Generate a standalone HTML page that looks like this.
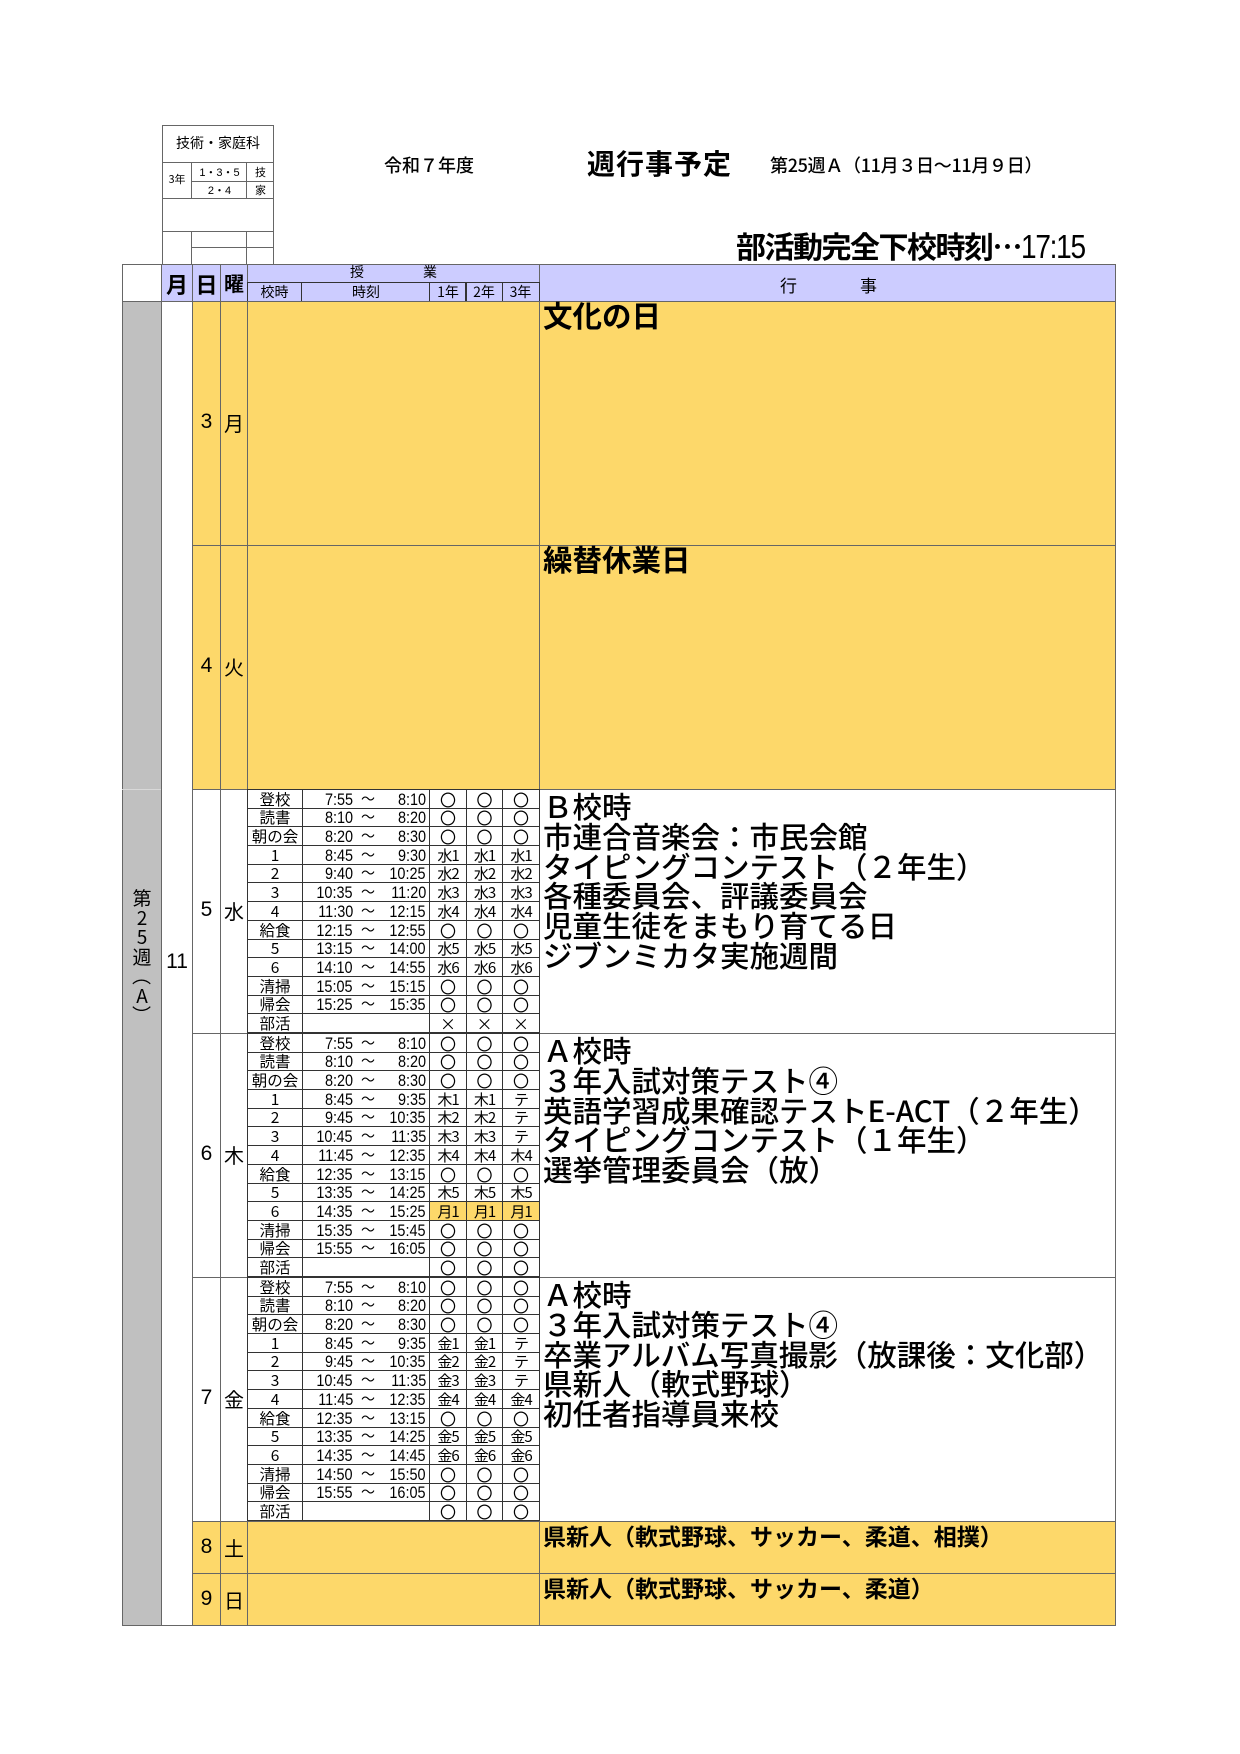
<!DOCTYPE html>
<html><head><meta charset="utf-8"><style>
*{margin:0;padding:0;box-sizing:border-box}
body{width:1240px;height:1754px;background:#fff;position:relative;font-family:"Liberation Sans","Noto Sans CJK JP",sans-serif;color:#000;overflow:hidden}
.a{position:absolute}
.c{position:absolute;border:1px solid #666}
.y{background:#fdd86a}
.h{background:#ccccff}
.g{background:#c0c0c0}
.ev{position:absolute;left:543px;width:570px;font-size:29.5px;line-height:29.8px;white-space:nowrap;font-family:"Noto Sans CJK JP",sans-serif;font-weight:500}
.ev2{position:absolute;left:543px;font-size:23px;line-height:26px;white-space:nowrap;font-family:"Noto Sans CJK JP",sans-serif;font-weight:bold}
table.s{position:absolute;left:247px;width:292px;height:244px;border-collapse:collapse;table-layout:fixed;font-family:"Noto Sans CJK JP",sans-serif;font-size:16px}
table.s td{border:1px solid #333;height:18.7px;line-height:17px;padding:0;text-align:center;white-space:nowrap;overflow:hidden;position:relative;vertical-align:bottom}
table.s td:first-child{font-size:15.5px;line-height:17px}
table.s td.t{font-family:"Liberation Sans Narrow","Liberation Sans",sans-serif;font-size:17px}
table.s td.t b,table.s td.t i,table.s td.t u{position:absolute;bottom:0;font-weight:normal;font-style:normal;text-decoration:none;display:inline-block;transform:scaleX(0.85);transform-origin:right bottom}
table.s td.t b{right:76px}
table.s td.t i{left:58px;font-family:"Noto Sans CJK JP",sans-serif;font-size:14px;transform:none}
table.s td.t u{right:3px}
table.s td.m{font-size:15px;letter-spacing:-1px}
table.s td.yy{background:#fdd86a}
.dd{font-size:21px;font-family:"Liberation Sans Narrow","Liberation Sans",sans-serif;text-align:center}
.ww{font-size:20px;font-family:"Noto Sans CJK JP",sans-serif;text-align:center}
</style></head><body>

<div class="c" style="left:162px;top:125px;width:112px;height:140px"></div>
<div class="a" style="left:162px;top:133px;width:112px;text-align:center;font-size:14px;font-family:'Noto Sans CJK JP',sans-serif">技術・家庭科</div>
<div class="c" style="left:162px;top:162px;width:112px;height:37px"></div>
<div class="c" style="left:162px;top:162px;width:30px;height:37px"></div>
<div class="c" style="left:246px;top:162px;width:28px;height:37px"></div>
<div class="c" style="left:191px;top:181px;width:56px;height:1px;border-width:1px 0 0 0"></div>
<div class="c" style="left:246px;top:181px;width:28px;height:1px;border-width:1px 0 0 0"></div>
<div class="a" style="left:162px;top:171px;width:30px;text-align:center;font-size:11px;font-family:'Noto Sans CJK JP',sans-serif">3年</div>
<div class="a" style="left:192px;top:164px;width:55px;text-align:center;font-size:11px">1・3・5</div>
<div class="a" style="left:192px;top:182px;width:55px;text-align:center;font-size:11px">2・4</div>
<div class="a" style="left:247px;top:164px;width:27px;text-align:center;font-size:11px;font-family:'Noto Sans CJK JP',sans-serif">技</div>
<div class="a" style="left:247px;top:182px;width:27px;text-align:center;font-size:11px;font-family:'Noto Sans CJK JP',sans-serif">家</div>
<div class="c" style="left:162px;top:231px;width:112px;height:34px"></div>
<div class="c" style="left:191px;top:231px;width:56px;height:34px"></div>
<div class="c" style="left:191px;top:247px;width:83px;height:1px;border-width:1px 0 0 0"></div>

<div class="a" style="left:384px;top:152px;font-size:18px;font-family:'Noto Sans CJK JP',sans-serif;font-weight:500">令和７年度</div>
<div class="a" style="left:587px;top:143px;font-size:28px;font-weight:bold;font-family:'Noto Sans CJK JP',sans-serif;letter-spacing:1px">週行事予定</div>
<div class="a" style="left:770px;top:152px;font-size:18px;font-family:'Noto Sans CJK JP',sans-serif;letter-spacing:-0.3px;font-weight:500">第25週Ａ（11月３日～11月９日）</div>
<div class="a" style="left:736px;top:227px;font-size:30px;font-family:'Noto Sans CJK JP',sans-serif;font-weight:bold;letter-spacing:-1.5px;line-height:36px">部活動完全下校時刻…<span style="font-family:'Liberation Sans Narrow','Liberation Sans',sans-serif;font-weight:normal;font-size:33px;display:inline-block;transform:scaleX(0.85);transform-origin:left">17:15</span></div>

<div class="c" style="left:122px;top:264px;width:40px;height:38px"></div>
<div class="c h" style="left:161px;top:264px;width:32px;height:38px"></div>
<div class="c h" style="left:192px;top:264px;width:29px;height:38px"></div>
<div class="c h" style="left:220px;top:264px;width:28px;height:38px"></div>
<div class="c h" style="left:247px;top:264px;width:293px;height:38px"></div>
<div class="c h" style="left:539px;top:264px;width:577px;height:38px"></div>
<div class="c" style="left:247px;top:282px;width:293px;height:20px;border-color:#333"></div>
<div class="c" style="left:301px;top:282px;width:129px;height:20px;border-color:#333"></div>
<div class="c" style="left:429px;top:282px;width:38px;height:20px;border-color:#333"></div>
<div class="c" style="left:465px;top:282px;width:38px;height:20px;border-color:#333"></div>
<div class="a ww" style="left:161px;top:268px;width:32px;font-size:22px;font-weight:bold">月</div>
<div class="a ww" style="left:192px;top:268px;width:29px;font-size:22px;font-weight:bold">日</div>
<div class="a ww" style="left:220px;top:268px;width:28px;font-size:20px;font-weight:bold">曜</div>
<div class="a" style="left:350px;top:263px;font-size:14px;font-family:'Noto Sans CJK JP',sans-serif;line-height:18px">授</div>
<div class="a" style="left:423px;top:263px;font-size:14px;font-family:'Noto Sans CJK JP',sans-serif;line-height:18px">業</div>
<div class="a" style="left:247px;top:283px;width:55px;text-align:center;font-size:14px;font-family:'Noto Sans CJK JP',sans-serif;line-height:18px">校時</div>
<div class="a" style="left:302px;top:283px;width:128px;text-align:center;font-size:14px;font-family:'Noto Sans CJK JP',sans-serif;line-height:18px">時刻</div>
<div class="a" style="left:430px;top:283px;width:36px;text-align:center;font-size:14px;font-family:'Noto Sans CJK JP',sans-serif;line-height:18px">1年</div>
<div class="a" style="left:466px;top:283px;width:36px;text-align:center;font-size:14px;font-family:'Noto Sans CJK JP',sans-serif;line-height:18px">2年</div>
<div class="a" style="left:502px;top:283px;width:37px;text-align:center;font-size:14px;font-family:'Noto Sans CJK JP',sans-serif;line-height:18px">3年</div>
<div class="a" style="left:780px;top:272px;font-size:17px;font-family:'Noto Sans CJK JP',sans-serif">行</div>
<div class="a" style="left:860px;top:272px;font-size:17px;font-family:'Noto Sans CJK JP',sans-serif">事</div>

<div class="c g" style="left:122px;top:301px;width:40px;height:1325px"></div>
<div class="a" style="left:122px;top:789px;width:40px;height:1px;background:#d8d8d8"></div>
<div class="a" style="left:130px;top:888px;width:24px;font-size:19px;line-height:19.5px;text-align:center;font-family:'Noto Sans CJK JP',sans-serif">第<br>2<br>5<br>週<br><span style="display:inline-block;transform:rotate(90deg)">（</span><br>A<br><span style="display:inline-block;transform:rotate(90deg)">）</span></div>
<div class="c" style="left:161px;top:301px;width:32px;height:1325px"></div>
<div class="a dd" style="left:161px;top:950px;width:32px">11</div>

<div class="c y" style="left:192px;top:301px;width:924px;height:245px"></div>
<div class="c" style="left:220px;top:301px;width:28px;height:245px"></div>
<div class="c" style="left:247px;top:301px;width:293px;height:245px"></div>
<div class="a dd" style="left:192px;top:410px;width:29px">3</div>
<div class="a ww" style="left:220px;top:408px;width:28px">月</div>
<div class="ev" style="top:301px;font-weight:bold">文化の日</div>

<div class="c y" style="left:192px;top:545px;width:924px;height:245px"></div>
<div class="c" style="left:220px;top:545px;width:28px;height:245px"></div>
<div class="c" style="left:247px;top:545px;width:293px;height:245px"></div>
<div class="a dd" style="left:192px;top:654px;width:29px">4</div>
<div class="a ww" style="left:220px;top:652px;width:28px">火</div>
<div class="ev" style="top:545px;font-weight:bold">繰替休業日</div>

<div class="c" style="left:192px;top:789px;width:924px;height:245px"></div>
<div class="c" style="left:220px;top:789px;width:28px;height:245px"></div>
<div class="c" style="left:247px;top:789px;width:293px;height:245px"></div>
<div class="a dd" style="left:192px;top:898px;width:29px">5</div>
<div class="a ww" style="left:220px;top:896px;width:28px">水</div>
<div class="ev" style="top:792px">Ｂ校時<br>市連合音楽会：市民会館<br>タイピングコンテスト（２年生）<br>各種委員会、評議委員会<br>児童生徒をまもり育てる日<br>ジブンミカタ実施週間</div>
<table class="s" style="top:789px"><colgroup><col style="width:55px"><col style="width:127px"><col style="width:37px"><col style="width:36px"><col style="width:37px"></colgroup>
<tr><td>登校</td><td class="t"><b>7:55</b><i>～</i><u>8:10</u></td><td>〇</td><td>〇</td><td>〇</td></tr>
<tr><td>読書</td><td class="t"><b>8:10</b><i>～</i><u>8:20</u></td><td>〇</td><td>〇</td><td>〇</td></tr>
<tr><td>朝の会</td><td class="t"><b>8:20</b><i>～</i><u>8:30</u></td><td>〇</td><td>〇</td><td>〇</td></tr>
<tr><td>1</td><td class="t"><b>8:45</b><i>～</i><u>9:30</u></td><td class="m">水1</td><td class="m">水1</td><td class="m">水1</td></tr>
<tr><td>2</td><td class="t"><b>9:40</b><i>～</i><u>10:25</u></td><td class="m">水2</td><td class="m">水2</td><td class="m">水2</td></tr>
<tr><td>3</td><td class="t"><b>10:35</b><i>～</i><u>11:20</u></td><td class="m">水3</td><td class="m">水3</td><td class="m">水3</td></tr>
<tr><td>4</td><td class="t"><b>11:30</b><i>～</i><u>12:15</u></td><td class="m">水4</td><td class="m">水4</td><td class="m">水4</td></tr>
<tr><td>給食</td><td class="t"><b>12:15</b><i>～</i><u>12:55</u></td><td>〇</td><td>〇</td><td>〇</td></tr>
<tr><td>5</td><td class="t"><b>13:15</b><i>～</i><u>14:00</u></td><td class="m">水5</td><td class="m">水5</td><td class="m">水5</td></tr>
<tr><td>6</td><td class="t"><b>14:10</b><i>～</i><u>14:55</u></td><td class="m">水6</td><td class="m">水6</td><td class="m">水6</td></tr>
<tr><td>清掃</td><td class="t"><b>15:05</b><i>～</i><u>15:15</u></td><td>〇</td><td>〇</td><td>〇</td></tr>
<tr><td>帰会</td><td class="t"><b>15:25</b><i>～</i><u>15:35</u></td><td>〇</td><td>〇</td><td>〇</td></tr>
<tr><td>部活</td><td></td><td>×</td><td>×</td><td>×</td></tr>
</table>

<div class="c" style="left:192px;top:1033px;width:924px;height:245px"></div>
<div class="c" style="left:220px;top:1033px;width:28px;height:245px"></div>
<div class="a dd" style="left:192px;top:1142px;width:29px">6</div>
<div class="a ww" style="left:220px;top:1140px;width:28px">木</div>
<div class="ev" style="top:1036px">Ａ校時<br>３年入試対策テスト④<br>英語学習成果確認テストE-ACT（２年生）<br>タイピングコンテスト（１年生）<br>選挙管理委員会（放）</div>
<table class="s" style="top:1033px"><colgroup><col style="width:55px"><col style="width:127px"><col style="width:37px"><col style="width:36px"><col style="width:37px"></colgroup>
<tr><td>登校</td><td class="t"><b>7:55</b><i>～</i><u>8:10</u></td><td>〇</td><td>〇</td><td>〇</td></tr>
<tr><td>読書</td><td class="t"><b>8:10</b><i>～</i><u>8:20</u></td><td>〇</td><td>〇</td><td>〇</td></tr>
<tr><td>朝の会</td><td class="t"><b>8:20</b><i>～</i><u>8:30</u></td><td>〇</td><td>〇</td><td>〇</td></tr>
<tr><td>1</td><td class="t"><b>8:45</b><i>～</i><u>9:35</u></td><td class="m">木1</td><td class="m">木1</td><td class="m">テ</td></tr>
<tr><td>2</td><td class="t"><b>9:45</b><i>～</i><u>10:35</u></td><td class="m">木2</td><td class="m">木2</td><td class="m">テ</td></tr>
<tr><td>3</td><td class="t"><b>10:45</b><i>～</i><u>11:35</u></td><td class="m">木3</td><td class="m">木3</td><td class="m">テ</td></tr>
<tr><td>4</td><td class="t"><b>11:45</b><i>～</i><u>12:35</u></td><td class="m">木4</td><td class="m">木4</td><td class="m">木4</td></tr>
<tr><td>給食</td><td class="t"><b>12:35</b><i>～</i><u>13:15</u></td><td>〇</td><td>〇</td><td>〇</td></tr>
<tr><td>5</td><td class="t"><b>13:35</b><i>～</i><u>14:25</u></td><td class="m">木5</td><td class="m">木5</td><td class="m">木5</td></tr>
<tr><td>6</td><td class="t"><b>14:35</b><i>～</i><u>15:25</u></td><td class="m yy">月1</td><td class="m yy">月1</td><td class="m yy">月1</td></tr>
<tr><td>清掃</td><td class="t"><b>15:35</b><i>～</i><u>15:45</u></td><td>〇</td><td>〇</td><td>〇</td></tr>
<tr><td>帰会</td><td class="t"><b>15:55</b><i>～</i><u>16:05</u></td><td>〇</td><td>〇</td><td>〇</td></tr>
<tr><td>部活</td><td></td><td>〇</td><td>〇</td><td>〇</td></tr>
</table>

<div class="c" style="left:192px;top:1277px;width:924px;height:245px"></div>
<div class="c" style="left:220px;top:1277px;width:28px;height:245px"></div>
<div class="a dd" style="left:192px;top:1386px;width:29px">7</div>
<div class="a ww" style="left:220px;top:1384px;width:28px">金</div>
<div class="ev" style="top:1280px">Ａ校時<br>３年入試対策テスト④<br>卒業アルバム写真撮影（放課後：文化部）<br>県新人（軟式野球）<br>初任者指導員来校</div>
<table class="s" style="top:1277px"><colgroup><col style="width:55px"><col style="width:127px"><col style="width:37px"><col style="width:36px"><col style="width:37px"></colgroup>
<tr><td>登校</td><td class="t"><b>7:55</b><i>～</i><u>8:10</u></td><td>〇</td><td>〇</td><td>〇</td></tr>
<tr><td>読書</td><td class="t"><b>8:10</b><i>～</i><u>8:20</u></td><td>〇</td><td>〇</td><td>〇</td></tr>
<tr><td>朝の会</td><td class="t"><b>8:20</b><i>～</i><u>8:30</u></td><td>〇</td><td>〇</td><td>〇</td></tr>
<tr><td>1</td><td class="t"><b>8:45</b><i>～</i><u>9:35</u></td><td class="m">金1</td><td class="m">金1</td><td class="m">テ</td></tr>
<tr><td>2</td><td class="t"><b>9:45</b><i>～</i><u>10:35</u></td><td class="m">金2</td><td class="m">金2</td><td class="m">テ</td></tr>
<tr><td>3</td><td class="t"><b>10:45</b><i>～</i><u>11:35</u></td><td class="m">金3</td><td class="m">金3</td><td class="m">テ</td></tr>
<tr><td>4</td><td class="t"><b>11:45</b><i>～</i><u>12:35</u></td><td class="m">金4</td><td class="m">金4</td><td class="m">金4</td></tr>
<tr><td>給食</td><td class="t"><b>12:35</b><i>～</i><u>13:15</u></td><td>〇</td><td>〇</td><td>〇</td></tr>
<tr><td>5</td><td class="t"><b>13:35</b><i>～</i><u>14:25</u></td><td class="m">金5</td><td class="m">金5</td><td class="m">金5</td></tr>
<tr><td>6</td><td class="t"><b>14:35</b><i>～</i><u>14:45</u></td><td class="m">金6</td><td class="m">金6</td><td class="m">金6</td></tr>
<tr><td>清掃</td><td class="t"><b>14:50</b><i>～</i><u>15:50</u></td><td>〇</td><td>〇</td><td>〇</td></tr>
<tr><td>帰会</td><td class="t"><b>15:55</b><i>～</i><u>16:05</u></td><td>〇</td><td>〇</td><td>〇</td></tr>
<tr><td>部活</td><td></td><td>〇</td><td>〇</td><td>〇</td></tr>
</table>

<div class="c y" style="left:192px;top:1521px;width:924px;height:53px"></div>
<div class="c" style="left:220px;top:1521px;width:28px;height:53px"></div>
<div class="c" style="left:247px;top:1521px;width:293px;height:53px"></div>
<div class="a dd" style="left:192px;top:1535px;width:29px">8</div>
<div class="a ww" style="left:220px;top:1533px;width:28px">土</div>
<div class="ev2" style="top:1522px">県新人（軟式野球、サッカー、柔道、相撲）</div>

<div class="c y" style="left:192px;top:1573px;width:924px;height:53px"></div>
<div class="c" style="left:220px;top:1573px;width:28px;height:53px"></div>
<div class="c" style="left:247px;top:1573px;width:293px;height:53px"></div>
<div class="a dd" style="left:192px;top:1587px;width:29px">9</div>
<div class="a ww" style="left:220px;top:1585px;width:28px">日</div>
<div class="ev2" style="top:1574px">県新人（軟式野球、サッカー、柔道）</div>

</body></html>
